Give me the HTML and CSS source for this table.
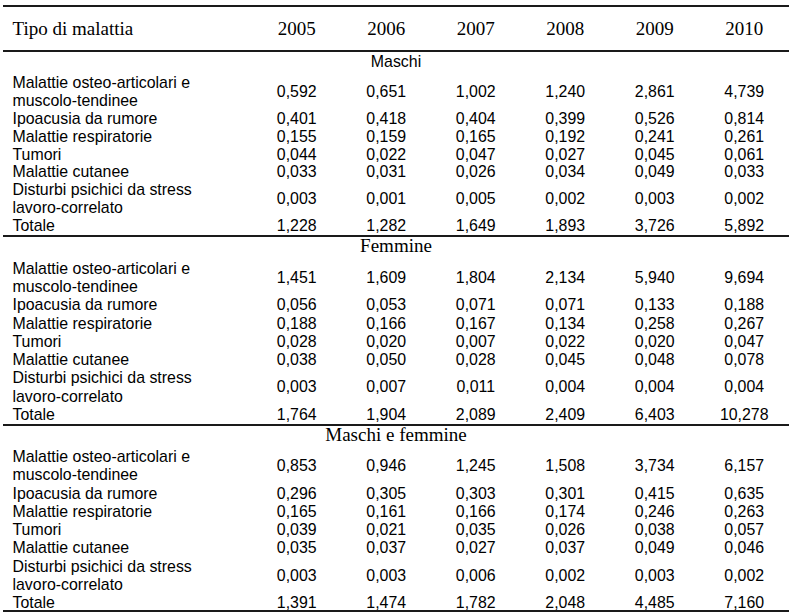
FILE: index.html
```html
<!DOCTYPE html>
<html lang="it">
<head>
<meta charset="utf-8">
<title>Tipo di malattia</title>
<link rel="stylesheet" href="styles.css">
</head>
<body>
<div class="tbl">
  <div class="row head">
    <div class="c1">Tipo di malattia</div>
    <div>2005</div><div>2006</div><div>2007</div><div>2008</div><div>2009</div><div>2010</div>
  </div>

  <div class="sec m">
    <div class="label">Maschi</div>
    <div class="row"><div class="c1">Malattie osteo-articolari e<br>muscolo-tendinee</div><div>0,592</div><div>0,651</div><div>1,002</div><div>1,240</div><div>2,861</div><div>4,739</div></div>
    <div class="row"><div class="c1">Ipoacusia da rumore</div><div>0,401</div><div>0,418</div><div>0,404</div><div>0,399</div><div>0,526</div><div>0,814</div></div>
    <div class="row"><div class="c1">Malattie respiratorie</div><div>0,155</div><div>0,159</div><div>0,165</div><div>0,192</div><div>0,241</div><div>0,261</div></div>
    <div class="row"><div class="c1">Tumori</div><div>0,044</div><div>0,022</div><div>0,047</div><div>0,027</div><div>0,045</div><div>0,061</div></div>
    <div class="row"><div class="c1">Malattie cutanee</div><div>0,033</div><div>0,031</div><div>0,026</div><div>0,034</div><div>0,049</div><div>0,033</div></div>
    <div class="row"><div class="c1">Disturbi psichici da stress<br>lavoro-correlato</div><div>0,003</div><div>0,001</div><div>0,005</div><div>0,002</div><div>0,003</div><div>0,002</div></div>
    <div class="row tot"><div class="c1">Totale</div><div>1,228</div><div>1,282</div><div>1,649</div><div>1,893</div><div>3,726</div><div>5,892</div></div>
  </div>

  <div class="sec f">
    <div class="label">Femmine</div>
    <div class="row"><div class="c1">Malattie osteo-articolari e<br>muscolo-tendinee</div><div>1,451</div><div>1,609</div><div>1,804</div><div>2,134</div><div>5,940</div><div>9,694</div></div>
    <div class="row"><div class="c1">Ipoacusia da rumore</div><div>0,056</div><div>0,053</div><div>0,071</div><div>0,071</div><div>0,133</div><div>0,188</div></div>
    <div class="row"><div class="c1">Malattie respiratorie</div><div>0,188</div><div>0,166</div><div>0,167</div><div>0,134</div><div>0,258</div><div>0,267</div></div>
    <div class="row"><div class="c1">Tumori</div><div>0,028</div><div>0,020</div><div>0,007</div><div>0,022</div><div>0,020</div><div>0,047</div></div>
    <div class="row"><div class="c1">Malattie cutanee</div><div>0,038</div><div>0,050</div><div>0,028</div><div>0,045</div><div>0,048</div><div>0,078</div></div>
    <div class="row"><div class="c1">Disturbi psichici da stress<br>lavoro-correlato</div><div>0,003</div><div>0,007</div><div>0,011</div><div>0,004</div><div>0,004</div><div>0,004</div></div>
    <div class="row tot"><div class="c1">Totale</div><div>1,764</div><div>1,904</div><div>2,089</div><div>2,409</div><div>6,403</div><div>10,278</div></div>
  </div>

  <div class="sec mf">
    <div class="label">Maschi e femmine</div>
    <div class="row"><div class="c1">Malattie osteo-articolari e<br>muscolo-tendinee</div><div>0,853</div><div>0,946</div><div>1,245</div><div>1,508</div><div>3,734</div><div>6,157</div></div>
    <div class="row"><div class="c1">Ipoacusia da rumore</div><div>0,296</div><div>0,305</div><div>0,303</div><div>0,301</div><div>0,415</div><div>0,635</div></div>
    <div class="row"><div class="c1">Malattie respiratorie</div><div>0,165</div><div>0,161</div><div>0,166</div><div>0,174</div><div>0,246</div><div>0,263</div></div>
    <div class="row"><div class="c1">Tumori</div><div>0,039</div><div>0,021</div><div>0,035</div><div>0,026</div><div>0,038</div><div>0,057</div></div>
    <div class="row"><div class="c1">Malattie cutanee</div><div>0,035</div><div>0,037</div><div>0,027</div><div>0,037</div><div>0,049</div><div>0,046</div></div>
    <div class="row"><div class="c1">Disturbi psichici da stress<br>lavoro-correlato</div><div>0,003</div><div>0,003</div><div>0,006</div><div>0,002</div><div>0,003</div><div>0,002</div></div>
    <div class="row tot"><div class="c1">Totale</div><div>1,391</div><div>1,474</div><div>1,782</div><div>2,048</div><div>4,485</div><div>7,160</div></div>
  </div>
</div>
</body>
</html>
```

FILE: styles.css
```css
html, body {
  margin: 0;
  padding: 0;
  background: #ffffff;
  color: #000000;
}

.tbl {
  margin: 5px 0 0 3px;
  width: 786px;
  border-top: 2px solid #1a1a1a;
  font-family: "Liberation Sans", Arial, sans-serif;
  font-size: 15.9px;
}

.row {
  display: grid;
  grid-template-columns: 249px repeat(6, 89.5px);
  align-items: center;
}

.row > div {
  text-align: center;
  white-space: nowrap;
}

.row > .c1 {
  text-align: left;
  padding-left: 9.5px;
}

.head {
  font-family: "Liberation Serif", "Times New Roman", serif;
  font-size: 19px;
  line-height: 20px;
  padding: 12px 0 11px;
  border-bottom: 2px solid #1a1a1a;
}

.sec {
  border-bottom: 2px solid #1a1a1a;
}

.label {
  text-align: center;
}

.m .label {
  line-height: 16px;
  padding-top: 2px;
  padding-bottom: 4.4px;
}

.m .row {
  line-height: 17.8px;
}

.f .label,
.mf .label {
  font-family: "Liberation Serif", "Times New Roman", serif;
  font-size: 19px;
  line-height: 18px;
}

.f .label {
  padding-bottom: 5.2px;
}

.mf .label {
  padding-bottom: 4px;
}

.f .row,
.mf .row {
  line-height: 18.25px;
}

.mf .tot {
  height: 16.25px;
}
```
